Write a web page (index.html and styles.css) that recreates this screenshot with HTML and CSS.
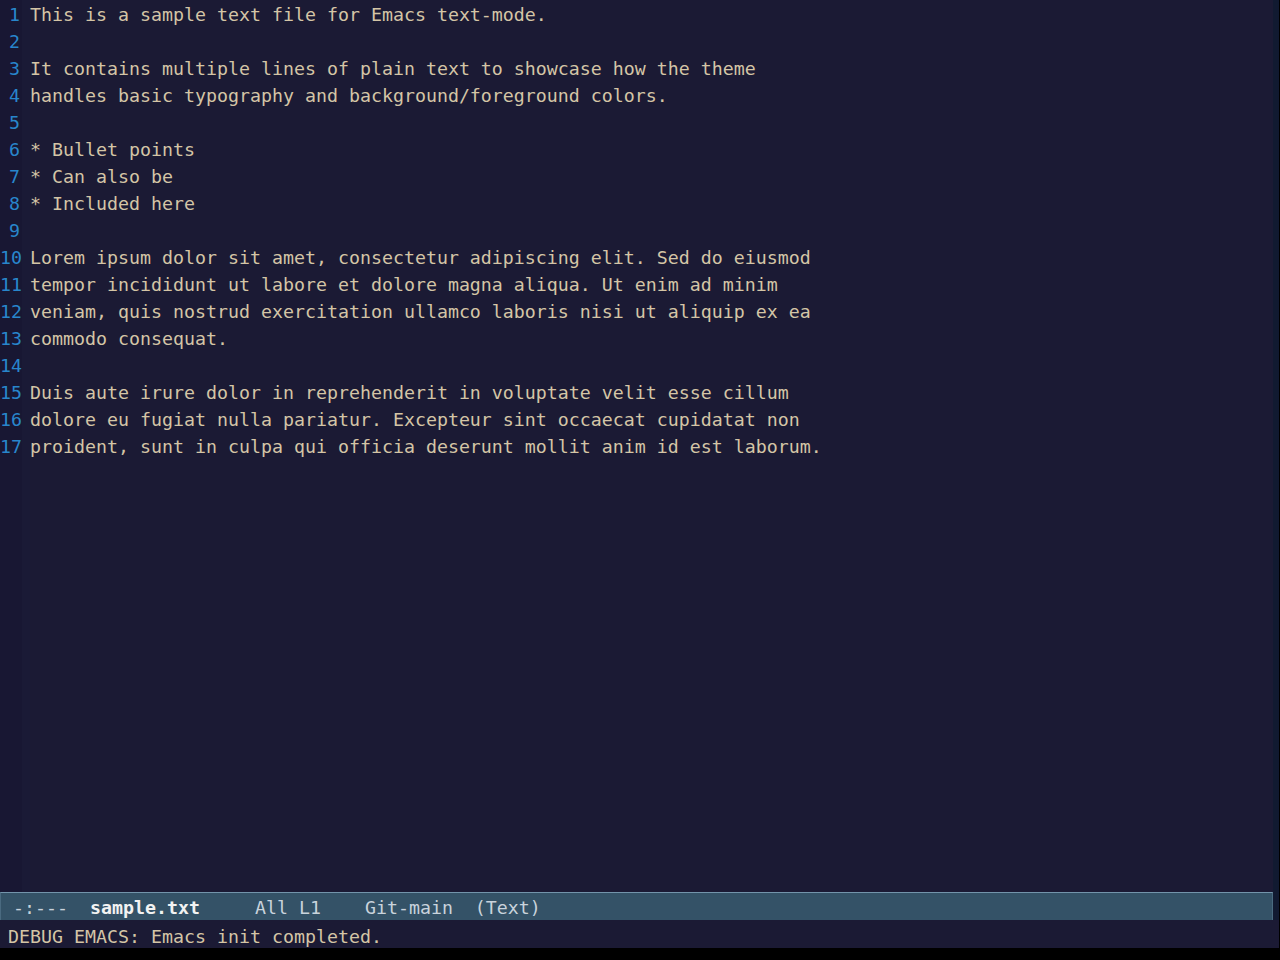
FILE: index.html
```html
<!DOCTYPE html>
<html lang="en">
<head>
    <meta charset="UTF-8">
    <title>sample.txt - Emacs</title>
    <link rel="stylesheet" href="styles.css">
</head>
<body>
    <div class="frame">
        <div class="window">
            <div class="gutter">
                <div>1</div><div>2</div><div>3</div><div>4</div><div>5</div><div>6</div>
                <div>7</div><div>8</div><div>9</div><div>10</div><div>11</div><div>12</div>
                <div>13</div><div>14</div><div>15</div><div>16</div><div>17</div>
            </div>
            <div class="fringe"></div>
            <pre class="buffer">This is a sample text file for Emacs text-mode.

It contains multiple lines of plain text to showcase how the theme
handles basic typography and background/foreground colors.

* Bullet points
* Can also be
* Included here

Lorem ipsum dolor sit amet, consectetur adipiscing elit. Sed do eiusmod
tempor incididunt ut labore et dolore magna aliqua. Ut enim ad minim
veniam, quis nostrud exercitation ullamco laboris nisi ut aliquip ex ea
commodo consequat.

Duis aute irure dolor in reprehenderit in voluptate velit esse cillum
dolore eu fugiat nulla pariatur. Excepteur sint occaecat cupidatat non
proident, sunt in culpa qui officia deserunt mollit anim id est laborum.</pre>
            <div class="right-fringe"></div>
        </div>
        <div class="modeline-row">
            <pre class="modeline"> -:---  <b>sample.txt</b>     All L1    Git-main  (Text)</pre>
            <div class="right-fringe"></div>
        </div>
        <pre class="echo">DEBUG EMACS: Emacs init completed.</pre>
    </div>
</body>
</html>
```

FILE: styles.css
```css
body {
    margin: 0;
    background-color: #000;
    width: 1280px;
    height: 960px;
    overflow: hidden;
}
.frame {
    width: 1279px;
    height: 948px;
    background-color: #1b1a34;
    display: flex;
    flex-direction: column;
    font-family: "DejaVu Sans Mono", monospace;
    font-size: 18.27px;
    line-height: 27px;
}
.window {
    display: flex;
    height: 892px;
}
.gutter {
    width: 20px;
    padding-right: 2px;
    padding-top: 1px;
    background-color: #181733;
    color: #2886cc;
    text-align: right;
}
.fringe {
    width: 8px;
    background-color: #1a1a36;
}
.buffer {
    flex: 1;
    margin: 0;
    padding-top: 1px;
    font: inherit;
    color: #d4c5a6;
}
.right-fringe {
    width: 6px;
    background-color: #111a31;
}
.modeline-row {
    display: flex;
    height: 28px;
}
.modeline {
    flex: 1;
    margin: 0;
    padding-left: 1px;
    font: inherit;
    line-height: 29px;
    color: #c9d3dc;
    background-color: #345267;
    border-top: 1px solid #7394ab;
    border-left: 1px solid #4a6a80;
    border-right: 1px solid #4a6a80;
    box-sizing: border-box;
}
.modeline b {
    color: #f2f2f2;
}
.echo {
    margin: 0;
    padding-left: 8px;
    height: 28px;
    font: inherit;
    line-height: 33px;
    color: #d4c5a6;
}
```
